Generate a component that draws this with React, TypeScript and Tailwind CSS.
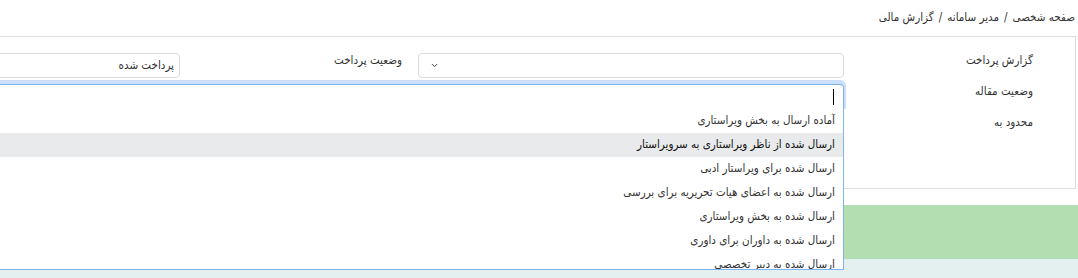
import { ChevronDown } from 'lucide-react';

const OPTIONS = [
  'آماده ارسال به بخش ویراستاری',
  'ارسال شده از ناظر ویراستاری به سرویراستار',
  'ارسال شده برای ویراستار ادبی',
  'ارسال شده به اعضای هیات تحریریه برای بررسی',
  'ارسال شده به بخش ویراستاری',
  'ارسال شده به داوران برای داوری',
  'ارسال شده به دبیر تخصصی',
];

export default function App() {
  const active = 1;

  return (
    <div
      dir="rtl"
      className="w-[1078px] h-[278px] overflow-hidden bg-white text-[11.5px] text-[#333]"
      style={{ fontFamily: '"DejaVu Sans Condensed", "DejaVu Sans", Tahoma, sans-serif' }}
    >
      {/* Breadcrumb */}
      <div className="h-[36px] pr-[3px] pt-[10px] leading-[14px] flex gap-[5px]">
        <span>صفحه شخصی</span>
        <span>/</span>
        <span>مدیر سامانه</span>
        <span>/</span>
        <span>گزارش مالی</span>
      </div>

      {/* Filter card */}
      <div className="mr-[2px] -ml-[20px] h-[153px] border border-[#ddd] pt-[16px]">
        {/* row 1 */}
        <div className="flex items-start h-[31px]">
          <div className="w-[231px] shrink-0 pr-[42px] leading-[14px]">گزارش پرداخت</div>
          <div className="w-[426px] shrink-0 h-[25px] border border-[#dcdcdc] rounded-[4px] flex items-center justify-end pl-[11px]">
            <ChevronDown className="w-[9px] h-[9px] text-[#333]" strokeWidth={2.5} />
          </div>
          <div className="w-[238px] shrink-0 pr-[16px] leading-[14px]">وضعیت پرداخت</div>
          <div className="w-[220px] shrink-0 h-[25px] border border-[#dcdcdc] rounded-[4px] pr-[5px] flex items-center">
            پرداخت شده
          </div>
        </div>

        {/* row 2 */}
        <div className="flex items-start h-[31px]">
          <div className="w-[231px] shrink-0 pr-[42px] leading-[14px]">وضعیت مقاله</div>
          <div className="relative flex-1">
            <div className="h-[25px] border border-[#80b4f0] border-b-0 rounded-tr-[4px] shadow-[0_-2px_0_2px_rgba(140,185,245,0.45)] pr-[9px] flex items-center">
              <span className="w-px h-[16px] bg-black" />
            </div>
            <div className="absolute top-[25px] right-0 left-0 h-[161px] overflow-hidden bg-white border border-t-0 border-[#80b4f0] z-10">
              {OPTIONS.map((o, i) => (
                <div
                  key={o}
                  className={`h-[24px] flex items-center pr-[8px] ${i === active ? 'bg-[#e8eaec] text-[#111]' : ''}`}
                >
                  {o}
                </div>
              ))}
            </div>
          </div>
        </div>

        {/* row 3 */}
        <div className="flex items-start h-[31px]">
          <div className="w-[231px] shrink-0 pr-[42px] leading-[14px]">محدود به</div>
        </div>
      </div>

      {/* result area */}
      <div className="mt-[16px] h-[54px] bg-[#b3deb1]" />
      <div className="h-[40px] bg-[#e4f0f0]" />
    </div>
  );
}
